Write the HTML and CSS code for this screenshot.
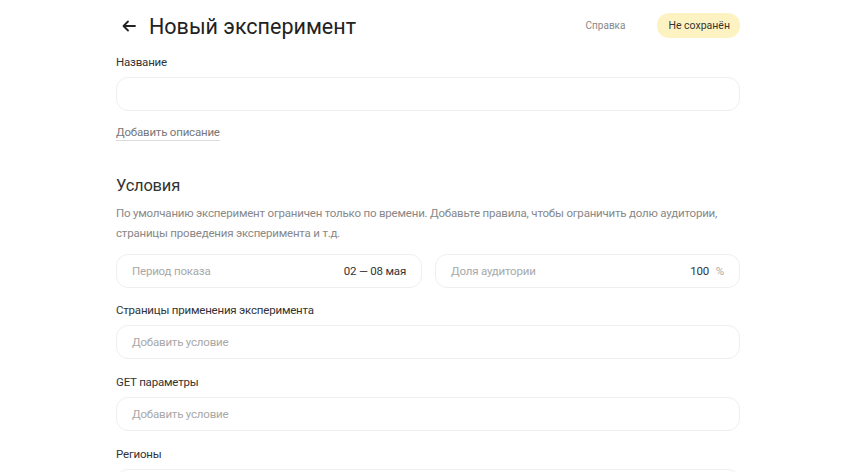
FILE: index.html
```html
<!DOCTYPE html>
<html lang="ru">
<head>
    <meta charset="UTF-8">
    <meta name="viewport" content="width=device-width, initial-scale=1.0">
    <title>Новый эксперимент</title>
    <link rel="stylesheet" href="styles.css">
</head>
<body>
    <div class="page">
        <div class="header">
            <div class="title-wrap">
                <span class="back">
                    <svg width="14" height="12" viewBox="0 0 14 12" fill="none" stroke="#222" stroke-width="1.8" stroke-linecap="round" stroke-linejoin="round">
                        <path d="M13 6H1.5M6 1.5L1.5 6L6 10.5"/>
                    </svg>
                </span>
                <h1>Новый эксперимент</h1>
            </div>
            <div class="header-actions">
                <a class="help">Справка</a>
                <span class="status">Не сохранён</span>
            </div>
        </div>

        <div class="field">
            <label>Название</label>
            <div class="input"></div>
        </div>
        <a class="add-desc">Добавить описание</a>

        <h2>Условия</h2>
        <p class="hint">По умолчанию эксперимент ограничен только по времени. Добавьте правила, чтобы ограничить долю аудитории, страницы проведения эксперимента и т.д.</p>

        <div class="row">
            <div class="input">
                <span class="placeholder">Период показа</span>
                <span class="value">02 — 08 мая</span>
            </div>
            <div class="input">
                <span class="placeholder">Доля аудитории</span>
                <span class="value">100 <span class="unit">%</span></span>
            </div>
        </div>

        <div class="field">
            <label>Страницы применения эксперимента</label>
            <div class="input"><span class="placeholder">Добавить условие</span></div>
        </div>
        <div class="field">
            <label>GET параметры</label>
            <div class="input"><span class="placeholder">Добавить условие</span></div>
        </div>
        <div class="field">
            <label>Регионы</label>
            <div class="input"></div>
        </div>
    </div>
</body>
</html>
```

FILE: styles.css
```css
body {
    margin: 0;
    background-color: #fff;
    font-family: Roboto, "Liberation Sans", Arial, sans-serif;
    color: #222;
}
.page {
    width: 624px;
    margin-left: 116px;
}
.header {
    display: flex;
    justify-content: space-between;
    align-items: center;
    height: 50px;
}
.title-wrap {
    display: flex;
    align-items: center;
    padding-top: 2px;
}
.back {
    display: flex;
    margin-left: 6px;
    margin-right: 13px;
}
h1 {
    margin: 0;
    font-size: 21.5px;
    font-weight: 400;
    color: #222;
}
.header-actions {
    display: flex;
    align-items: center;
    gap: 32px;
}
.help {
    font-size: 10px;
    color: #888;
}
.status {
    background-color: #fdf3c2;
    color: #333;
    font-size: 10.5px;
    padding: 6px 10px 6px 11px;
    border-radius: 12px;
}
.field {
    margin-top: 4px;
}
.field + .field {
    margin-top: 15px;
}
.row + .field {
    margin-top: 14px;
}
label {
    display: block;
    font-size: 11.5px;
    letter-spacing: -0.2px;
    line-height: 16px;
    color: #333;
    margin-bottom: 7px;
}
.input {
    box-sizing: border-box;
    height: 34px;
    border: 1px solid #efefef;
    border-radius: 12px;
    display: flex;
    align-items: center;
    justify-content: space-between;
    padding: 0 15px;
    font-size: 11.5px;
    letter-spacing: -0.2px;
}
.placeholder {
    color: #a8a8a8;
}
.value {
    color: #333;
}
.unit {
    color: #aaa;
    margin-left: 4px;
}
.add-desc {
    display: inline-block;
    margin-top: 13px;
    font-size: 11.5px;
    letter-spacing: -0.2px;
    line-height: 16px;
    color: #777;
    border-bottom: 1px solid #ddd;
}
h2 {
    margin: 33px 0 0;
    font-size: 16.5px;
    letter-spacing: -0.2px;
    font-weight: 400;
    line-height: 24px;
    color: #333;
}
.hint {
    margin: 5px 0 0;
    font-size: 11.5px;
    letter-spacing: -0.2px;
    line-height: 20px;
    color: #888;
}
.row {
    display: grid;
    grid-template-columns: 306px 305px;
    gap: 13px;
    margin-top: 11px;
}
```
